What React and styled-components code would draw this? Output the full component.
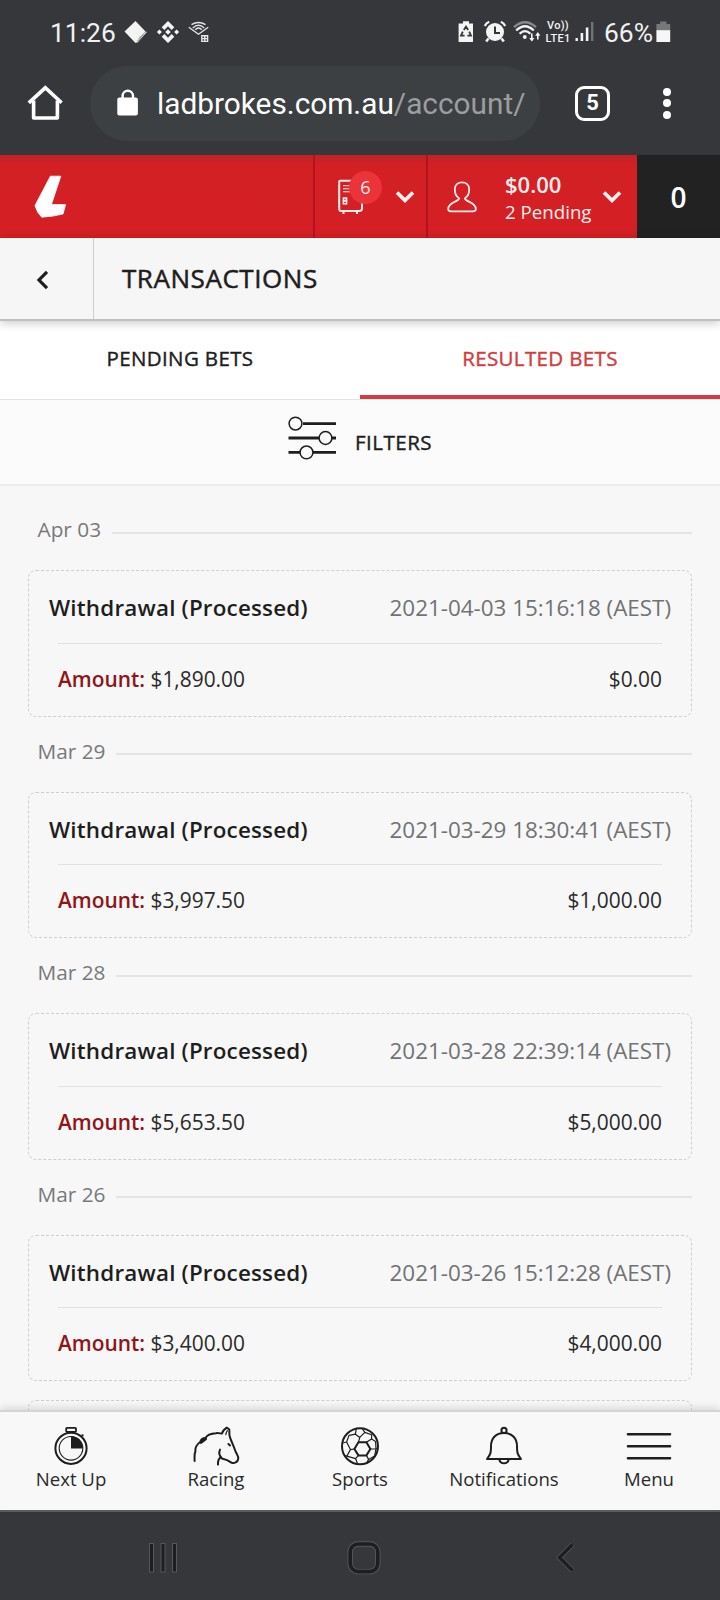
import React from "react";
import styled, { createGlobalStyle } from "styled-components";

const bets = [
  { day: "Apr 03", time: "2021-04-03 15:16:18 (AEST)", amount: "$1,890.00", balance: "$0.00" },
  { day: "Mar 29", time: "2021-03-29 18:30:41 (AEST)", amount: "$3,997.50", balance: "$1,000.00" },
  { day: "Mar 28", time: "2021-03-28 22:39:14 (AEST)", amount: "$5,653.50", balance: "$5,000.00" },
  { day: "Mar 26", time: "2021-03-26 15:12:28 (AEST)", amount: "$3,400.00", balance: "$4,000.00" },
];

const Chevron = () => (
  <svg width="20" height="14" viewBox="0 0 20 14" fill="none" stroke="#fdf3f2" strokeWidth="3.6">
    <path d="M2 2.5 L10 10.4 L18 2.5" />
  </svg>
);

const StatusIconsLeft = () => (
  <>
    <Icon $left={8}>
      <svg width="24" height="24" viewBox="0 0 24 24">
        <path d="M11.5 1 L21.5 11.5 C19 15 15.5 16 12.5 22.5 L11.5 23 L0.5 11.5 Z" fill="#f4f4f4" />
        <path d="M22.5 12 C19 14.5 15.5 17 13 22.6 Z" fill="none" stroke="#d5d5d7" strokeWidth="1" />
      </svg>
    </Icon>
    <Icon $left={8}>
      <svg width="24" height="24" viewBox="0 0 24 24">
        <g fill="#f4f4f4">
          <path d="M12 1 L18.3 7.3 L15.6 9.9 L12 6.3 L8.4 9.9 L5.7 7.3 Z" />
          <path d="M12 23 L18.3 16.7 L15.6 14.1 L12 17.7 L8.4 14.1 L5.7 16.7 Z" />
          <path d="M12 9.2 L14.8 12 L12 14.8 L9.2 12 Z" />
          <path d="M3.4 9.5 L5.9 12 L3.4 14.5 L0.9 12 Z" />
          <path d="M20.6 9.5 L23.1 12 L20.6 14.5 L18.1 12 Z" />
        </g>
      </svg>
    </Icon>
    <Icon $left={7}>
      <svg width="24" height="24" viewBox="0 0 24 24" fill="none" stroke="#e6e6e8" strokeWidth="1.4">
        <path d="M1.8 7.2 L11.5 14.2 L21.2 7.2" />
        <path d="M4.5 4.6 Q11.5 0.4 18.5 4.6" />
        <path d="M5.8 7.9 Q11.5 2.6 17.2 7.9" />
        <path d="M8.2 9.7 Q11.5 6.2 14.8 9.7" />
        <path d="M14.8 15.8 H20.6 V21.4 H14.8 Z M17.7 15.8 V21.4 M14.8 18.6 H20.6" />
      </svg>
    </Icon>
  </>
);

const StatusIconsRight = () => (
  <>
    <Icon>
      <svg width="16" height="24" viewBox="0 0 16 24">
        <path d="M5 1.2 H11 V3.4 H15 V22 H0.6 V3.4 H5 Z" fill="#f4f4f4" />
        <path d="M5.8 10 L8 6.6 L10.2 10 M11.2 11.6 L13 15.6 H9.4 M6.6 15.6 H3 L4.8 11.6" fill="none" stroke="#35363a" strokeWidth="1.8" />
      </svg>
    </Icon>
    <Icon $left={9}>
      <svg width="24" height="24" viewBox="0 0 24 24">
        <circle cx="12" cy="12" r="9" fill="#f4f4f4" />
        <path d="M12 6.5 V13 H17" fill="none" stroke="#35363a" strokeWidth="2" />
        <path d="M1.8 6 Q3 3 6.2 1.8 M22.2 6 Q21 3 17.8 1.8" fill="none" stroke="#f4f4f4" strokeWidth="2.2" />
        <path d="M5.5 18.5 L3.2 21.5 M18.5 18.5 L20.8 21.5" stroke="#f4f4f4" strokeWidth="2.6" />
      </svg>
    </Icon>
    <Icon $left={6}>
      <svg width="28" height="24" viewBox="0 0 28 24" fill="none" strokeWidth="2.3">
        <path d="M1 7.2 Q12 -2.6 23 7.2" stroke="#88898c" />
        <path d="M3.2 10.5 Q12 2 20.8 10.5 M6.6 13.8 Q12 8.4 17.4 13.8" stroke="#f4f4f4" />
        <circle cx="11.8" cy="17" r="1.9" fill="#f4f4f4" />
        <path d="M18.8 13.5 V20.5 M24.8 19.5 V13.5" stroke="#f4f4f4" strokeWidth="1.6" />
        <path d="M16.2 18 H21.4 L18.8 21.6 Z M22.2 15.8 H27.4 L24.8 12 Z" fill="#f4f4f4" />
      </svg>
    </Icon>
    <Volte>
      <span>Vo))</span>
      <span>LTE1</span>
    </Volte>
    <Icon $left={3}>
      <svg width="20" height="22" viewBox="0 0 20 22">
        <g fill="#f4f4f4">
          <rect x="0.5" y="17" width="2.4" height="3" />
          <rect x="5.6" y="12" width="2.6" height="8" />
          <rect x="10.8" y="6.5" width="2.6" height="13.5" />
        </g>
        <rect x="16" y="1" width="2.4" height="19" fill="#717275" />
      </svg>
    </Icon>
    <Clock $left={9}>66%</Clock>
    <Icon $left={3}>
      <svg width="15" height="22" viewBox="0 0 15 22">
        <path d="M4.2 0.4 H10.4 V3 H14.2 V10 H0.4 V3 H4.2 Z" fill="#77787b" />
        <rect x="0.4" y="9.2" width="13.8" height="11.8" fill="#f6f6f6" />
      </svg>
    </Icon>
  </>
);

const HomeIcon = () => (
  <svg width="36" height="36" viewBox="0 0 36 36" fill="none" stroke="#fff" strokeWidth="3.6" strokeLinejoin="round">
    <path d="M1.8 17.8 L18.3 2.8 L34.6 17.8" strokeLinejoin="miter" />
    <path d="M6.6 15.5 V33 H30.4 V15.5" />
  </svg>
);

const LockIcon = () => (
  <svg width="22" height="28" viewBox="0 0 22 28">
    <path d="M5.6 10 V7 a5.2 5.3 0 0 1 10.4 0 V10" fill="none" stroke="#fff" strokeWidth="2.4" />
    <rect x="0.3" y="8.6" width="20.6" height="18" rx="2" fill="#fff" />
  </svg>
);

const Logo = () => (
  <svg width="34" height="44" viewBox="0 0 34 44">
    <path d="M16.4 1.2 H26.8 L17.4 29.6 H31.6 L29 39 Q20 41.4 7.8 42.2 Q3 38 1 30.5 Z" fill="#fff" stroke="#fff" strokeWidth="0.8" strokeLinejoin="round" />
  </svg>
);

const BookIcon = () => (
  <svg width="26" height="36" viewBox="0 0 26 36" fill="none" stroke="#fdeeed" strokeWidth="2">
    <path d="M14 1.8 H2 Q1.2 1.8 1.2 3 V29.5 Q1.2 32 3 32 H21 Q24 32 24 29.5 V23" />
    <path d="M5 6.8 H13 M5 9.8 H12 M5 12.8 H12" strokeWidth="1.1" />
    <rect x="5.4" y="19" width="3.2" height="2.4" strokeWidth="1.5" />
    <rect x="5.4" y="22" width="3.2" height="2.8" strokeWidth="1.5" />
    <path d="M5.5 32 V35 M19 32 V35" strokeWidth="2" />
  </svg>
);

const PersonIcon = () => (
  <svg width="30" height="32" viewBox="0 0 30 32" fill="none" stroke="#fdeeed" strokeWidth="1.8" strokeLinejoin="round">
    <path d="M12.2 17.4 C9 15.2 7.6 11.6 7.8 8 C8 4 11 1.4 15 1.4 C19 1.4 22 4 22.2 8 C22.4 11.6 21 15.2 17.8 17.4 C18.4 21 28.6 20.6 28.8 28 C28.9 29.6 27.6 30.3 26 30.3 H4 C2.4 30.3 1.1 29.6 1.2 28 C1.4 20.6 11.6 21 12.2 17.4 Z" />
  </svg>
);

const FilterIcon = () => (
  <svg width="50" height="46" viewBox="0 0 50 46" fill="#fbfbfb" stroke="#1e1e1e">
    <path d="M15 8.6 H48 M0.5 23 H48 M0.5 37.4 H48" strokeWidth="2.8" />
    <circle cx="7.5" cy="8.6" r="6.4" strokeWidth="1.5" />
    <circle cx="37.5" cy="23" r="6.4" strokeWidth="1.5" />
    <circle cx="18.5" cy="37.4" r="6.4" strokeWidth="1.5" />
  </svg>
);

const StopwatchIcon = () => (
  <svg width="46" height="40" viewBox="0 0 46 40" fill="none" stroke="#1e1e1e">
    <circle cx="23" cy="22.3" r="15.6" strokeWidth="2" />
    <circle cx="23" cy="22.3" r="11.8" strokeWidth="1.1" />
    <rect x="18.2" y="1.8" width="9.8" height="4" rx="0.8" strokeWidth="1.8" />
    <path d="M33.5 9.6 L35.5 9.2" strokeWidth="2" />
    <path d="M23 22.4 V10.2 A12 12 0 0 1 35 22.4 Z" fill="#1e1e1e" stroke="none" />
  </svg>
);

const HorseIcon = () => (
  <svg width="48" height="40" viewBox="0 0 48 40" fill="none" stroke="#1e1e1e" strokeWidth="2" strokeLinejoin="round" strokeLinecap="round">
    <path d="M2.6 35 C2.6 31 2 28 3.4 25.5 C3 22 5.4 18 8.2 16 C9 13 11 12 13.4 12 C15 9 20 7.4 24 7.2 C26 6.8 28 7.4 30 7.6 C30.6 4.8 32.6 3 34.8 1.6 C36 3.6 37.8 1.6 37.4 5 C37.4 7 37 9 38 11.4 C39.6 16 41.6 20 43 24 C44.2 28 47 30 46.2 33 C45.8 36 42 38 39.4 36.6 C36.6 34.4 33 33 30 32.4 C27 29.6 26.4 27 28 23.6" />
    <path d="M28.6 31.4 C26.4 33 25.8 36 26 38.6" />
    <path d="M33.8 8.6 C34 6.8 34.6 5.6 35.4 4.6" strokeWidth="1.2" />
    <path d="M9 16.4 L13.6 12.8" strokeWidth="3" />
    <path d="M36.4 18 L38 19.4" strokeWidth="2" />
  </svg>
);

const BallIcon = () => (
  <svg width="40" height="40" viewBox="0 0 40 40" fill="none" stroke="#1e1e1e">
    <circle cx="20" cy="20.3" r="18" strokeWidth="2" />
    <path d="M18.4 16.3 H26.4 L30.4 23 L26.4 29.4 H18.4 L14.4 23 Z" strokeWidth="2" strokeLinejoin="round" />
    <g strokeWidth="1.2" strokeLinejoin="round">
      <path d="M18.4 16.3 L19.8 11.4 L15.4 8.2 L9 9.4 L6.6 16 M19.8 11.4 L24.8 6.4 L31.6 8.8 L31.6 13 L26.4 16.3" />
      <path d="M15.4 8.2 L16.2 3 M24.8 6.4 L22.4 2.8 M31.6 13 L35.6 15.4 L36 22.8 L30.4 23 M36 22.8 H38" />
      <path d="M14.4 23 L10.4 23.6 L6.6 16 L2.6 17 M10.4 23.6 L6.8 30.2 L4 29 M18.4 29.4 L15.6 32.6 L6.8 30.2" />
      <path d="M26.4 29.4 L28.6 33.4 L34.6 30 L36 22.8 M28.6 33.4 L26.6 37 M15.6 32.6 L17.6 38" />
    </g>
  </svg>
);

const BellIcon = () => (
  <svg width="38" height="40" viewBox="0 0 38 40" fill="none" stroke="#1e1e1e" strokeWidth="2" strokeLinejoin="round">
    <circle cx="19" cy="4.4" r="2.6" />
    <path d="M19 7 C10.6 7 6 12.6 6 20 C6 26 6 28 2 33 H36 C32 28 32 26 32 20 C32 12.6 27.4 7 19 7 Z" />
    <path d="M14.2 33.4 A4.9 4.9 0 0 0 23.8 33.4" />
  </svg>
);

const MenuIcon = () => (
  <svg width="46" height="40" viewBox="0 0 46 40" stroke="#1e1e1e" strokeWidth="2.6" strokeLinecap="round">
    <path d="M2 8.2 H44 M2 20.2 H44 M2 32.2 H44" />
  </svg>
);

const App = () => {
  return (
    <>
      <GlobalStyle />
      <Screen>
        <StatusBar>
          <Clock $width={66}>11:26</Clock>
          <StatusIconsLeft />
          <Spacer />
          <StatusIconsRight />
        </StatusBar>
        <BrowserBar>
          <HomeIcon />
          <AddressBar>
            <LockIcon />
            <Url>
              ladbrokes.com.au<span>/account/</span>
            </Url>
          </AddressBar>
          <TabCount>5</TabCount>
          <Dots>
            <i />
            <i />
            <i />
          </Dots>
        </BrowserBar>

        <Header>
          <LogoCell>
            <Logo />
          </LogoCell>
          <BookCell>
            <BookWrap>
              <BookIcon />
              <Badge>6</Badge>
            </BookWrap>
            <Chevron />
          </BookCell>
          <AccountCell>
            <PersonIcon />
            <Balance>
              <b>$0.00</b>
              <span>2 Pending</span>
            </Balance>
            <Chevron />
          </AccountCell>
          <SlipCell>0</SlipCell>
        </Header>

        <TitleBar>
          <BackButton>
            <svg width="14" height="20" viewBox="0 0 14 20" fill="none" stroke="#1e1e1e" strokeWidth="3.2">
              <path d="M11 1.8 L3 10 L11 18.2" />
            </svg>
          </BackButton>
          <Title>TRANSACTIONS</Title>
        </TitleBar>

        <Tabs>
          <Tab>PENDING BETS</Tab>
          <Tab $active>RESULTED BETS</Tab>
        </Tabs>
        <Filters>
          <FilterIcon />
          <span>FILTERS</span>
        </Filters>

        <List>
          {bets.map((bet) => (
            <div key={bet.time}>
              <Day>{bet.day}</Day>
              <Card>
                <CardTop>
                  <Kind>Withdrawal (Processed)</Kind>
                  <Time>{bet.time}</Time>
                </CardTop>
                <CardBottom>
                  <p>
                    <Label>Amount:</Label> {bet.amount}
                  </p>
                  <p>{bet.balance}</p>
                </CardBottom>
              </Card>
            </div>
          ))}
          <NextCard />
        </List>

        <BottomNav>
          <NavItem>
            <StopwatchIcon />
            Next Up
          </NavItem>
          <NavItem>
            <HorseIcon />
            Racing
          </NavItem>
          <NavItem>
            <BallIcon />
            Sports
          </NavItem>
          <NavItem>
            <BellIcon />
            Notifications
          </NavItem>
          <NavItem>
            <MenuIcon />
            Menu
          </NavItem>
        </BottomNav>

        <SystemNav>
          <svg width="34" height="36" viewBox="0 0 34 36" fill="#1d1e22" stroke="#56575b" strokeWidth="1">
            <rect x="3.5" y="3.5" width="4" height="28.5" />
            <rect x="15" y="3.5" width="4" height="28.5" />
            <rect x="26.5" y="3.5" width="4" height="28.5" />
          </svg>
          <svg width="36" height="36" viewBox="0 0 36 36" fill="none">
            <rect x="4.2" y="4" width="27.6" height="27.6" rx="8" stroke="#56575b" strokeWidth="5.4" />
            <rect x="4.2" y="4" width="27.6" height="27.6" rx="8" stroke="#1d1e22" strokeWidth="3.6" />
          </svg>
          <svg width="24" height="36" viewBox="0 0 24 36" fill="none">
            <path d="M18.5 4.5 L5.5 17.5 L18.5 30.5" stroke="#56575b" strokeWidth="5" />
            <path d="M18.5 4.5 L5.5 17.5 L18.5 30.5" stroke="#1d1e22" strokeWidth="3.4" />
          </svg>
        </SystemNav>
      </Screen>
    </>
  );
};

const GlobalStyle = createGlobalStyle`
  * {
    box-sizing: border-box;
  }
  body {
    margin: 0;
    background: #36373b;
  }
  p {
    margin: 0;
  }
  svg {
    display: block;
    flex: none;
  }
`;
const Screen = styled.div`
  width: 720px;
  height: 1600px;
  display: flex;
  flex-direction: column;
  overflow: hidden;
  background: #f7f7f7;
  color: #1e1e1e;
  font-family: "Open Sans", "Noto Sans", sans-serif;
  white-space: nowrap;
`;
const StatusBar = styled.div`
  height: 64px;
  flex: none;
  display: flex;
  align-items: center;
  padding: 0 49px 0 50px;
  background: #36373b;
`;
const Clock = styled.span`
  margin-left: ${(props) => props.$left || 0}px;
  width: ${(props) => (props.$width ? props.$width + "px" : "auto")};
  font: 400 26.4px/30px Roboto, sans-serif;
  color: #f1f1f2;
  padding-top: 2px;
`;
const Icon = styled.span`
  margin-left: ${(props) => props.$left || 0}px;
`;
const Spacer = styled.span`
  flex: 1;
`;
const Volte = styled.span`
  margin: 0 0 0 3px;
  width: 28px;
  display: flex;
  flex-direction: column;
  align-items: center;
  font: 500 11px/13px Roboto, sans-serif;
  letter-spacing: 0.3px;
  color: #f4f4f4;
`;
const BrowserBar = styled.div`
  height: 91px;
  flex: none;
  display: flex;
  align-items: center;
  padding: 0 49px 13px 27px;
  background: #36373b;
`;
const AddressBar = styled.div`
  width: 450px;
  height: 75px;
  margin: 0 35px 0 27px;
  padding: 0 14px 0 27px;
  display: flex;
  align-items: center;
  gap: 18px;
  border-radius: 38px;
  background: #3c4043;
`;
const Url = styled.div`
  flex: 1;
  overflow: hidden;
  padding-top: 2px;
  font: 400 29.8px/40px Roboto, sans-serif;
  color: #fff;
  span {
    color: #9b9da0;
  }
`;
const TabCount = styled.div`
  width: 35px;
  height: 35px;
  border: 3.5px solid #fff;
  border-radius: 9px;
  color: #fff;
  text-align: center;
  font: 700 22px/28px Roboto, sans-serif;
`;
const Dots = styled.div`
  margin-left: auto;
  display: flex;
  flex-direction: column;
  gap: 3.5px;
  i {
    width: 8px;
    height: 8px;
    border-radius: 50%;
    background: #fff;
  }
`;
const Header = styled.div`
  height: 83px;
  flex: none;
  display: grid;
  grid-template-columns: 313px 113px 211px 83px;
  background: linear-gradient(#bf2228, #d32024 10px, #d42024);
`;
const LogoCell = styled.div`
  padding: 20px 0 0 34px;
`;
const BookCell = styled.div`
  display: flex;
  align-items: center;
  padding-left: 23px;
  border-left: 2px solid #b3141b;
`;
const BookWrap = styled.div`
  position: relative;
  margin-right: 30.5px;
`;
const Badge = styled.span`
  position: absolute;
  left: 11px;
  top: -8px;
  width: 33px;
  height: 33px;
  border-radius: 50%;
  background: #ea3439;
  color: #fdeeed;
  font-size: 18px;
  line-height: 33px;
  text-align: center;
`;
const AccountCell = styled.div`
  display: flex;
  align-items: center;
  padding-left: 19px;
  border-left: 2px solid #b3141b;
`;
const Balance = styled.div`
  width: 97px;
  margin-left: 28px;
  padding-top: 2px;
  display: flex;
  flex-direction: column;
  color: #fdeeed;
  b {
    font-size: 22px;
    line-height: 27px;
    font-weight: 600;
  }
  span {
    font-size: 18.7px;
    line-height: 27px;
  }
`;
const SlipCell = styled.div`
  background: #222;
  color: #fff;
  text-align: center;
  font-size: 28px;
  font-weight: 600;
  line-height: 84px;
`;
const TitleBar = styled.div`
  height: 83px;
  flex: none;
  position: relative;
  display: flex;
  background: #f6f6f6;
  border-bottom: 2px solid #bfc0bf;
  box-shadow: 0 2px 9px rgba(0, 0, 0, 0.22);
`;
const BackButton = styled.div`
  width: 94px;
  padding: 32px 0 0 36px;
  border-right: 1px solid #cfcfcf;
`;
const Title = styled.h1`
  margin: 0 0 0 28px;
  font-size: 26px;
  line-height: 80px;
  font-weight: 400;
  letter-spacing: 0.55px;
  -webkit-text-stroke: 0.5px;
`;
const Tabs = styled.div`
  height: 79px;
  flex: none;
  display: flex;
  background: #fff;
  border-bottom: 1px solid #e4e4e4;
`;
const Tab = styled.div`
  flex: 1;
  text-align: center;
  font-size: 20.5px;
  line-height: 74px;
  letter-spacing: 0.35px;
  -webkit-text-stroke: 0.4px;
  color: ${(props) => (props.$active ? "#d13d40" : "#1e1e1e")};
  border-bottom: ${(props) => (props.$active ? "4px solid #cf3f42" : "none")};
`;
const Filters = styled.div`
  height: 86px;
  flex: none;
  display: flex;
  align-items: center;
  padding: 0 0 8px 288px;
  gap: 17px;
  background: #fbfbfb;
  border-bottom: 2px solid #ececec;
  font-size: 20.5px;
  letter-spacing: 0.5px;
  -webkit-text-stroke: 0.4px;
  span {
    padding-top: 7px;
  }
`;
const List = styled.div`
  flex: 1;
  min-height: 0;
  overflow: hidden;
  padding: 9px 28px 0;
`;
const Day = styled.div`
  height: 75px;
  padding: 16px 0 0 9.5px;
  display: flex;
  font-size: 20.8px;
  line-height: 36.5px;
  color: #77797b;
  &:after {
    content: "";
    flex: 1;
    height: 2px;
    margin: 20.5px 0 0 11px;
    background: #e4e4e4;
  }
`;
const Card = styled.div`
  height: 146.5px;
  border: 1.5px dashed #cfcfcf;
  border-radius: 8px;
`;
const CardTop = styled.div`
  height: 71.5px;
  margin: 0 20px;
  display: flex;
  justify-content: space-between;
  font-size: 22.4px;
  line-height: 73px;
`;
const Kind = styled.span`
  font-weight: 600;
  letter-spacing: 0.2px;
`;
const Time = styled.span`
  color: #707274;
`;
const CardBottom = styled.div`
  margin: 0 29px;
  display: flex;
  justify-content: space-between;
  border-top: 1px solid #e2e2e2;
  font-size: 20.9px;
  line-height: 71.5px;
  color: #2a2a2a;
`;
const Label = styled.span`
  font-weight: 600;
  color: #8f1519;
`;
const NextCard = styled(Card)`
  margin-top: 19px;
`;
const BottomNav = styled.div`
  height: 100px;
  flex: none;
  position: relative;
  display: flex;
  justify-content: space-between;
  padding-top: 14px;
  background: #f8f8f8;
  border-top: 2px solid #d4d4d4;
  box-shadow: 0 -2px 8px rgba(0, 0, 0, 0.13);
`;
const NavItem = styled.div`
  width: 144px;
  display: flex;
  flex-direction: column;
  align-items: center;
  font-size: 18.6px;
  line-height: 26.5px;
  color: #2a2a2a;
  &:first-child {
    padding-right: 2px;
  }
  &:last-child {
    padding-left: 2px;
  }
`;
const SystemNav = styled.div`
  height: 90px;
  flex: none;
  display: grid;
  grid-template-columns: repeat(3, 201.5px);
  place-items: center;
  padding: 4px 0 0 62px;
  background: #36373b;
  border-top: 2px solid #5d605f;
`;

export default App;
